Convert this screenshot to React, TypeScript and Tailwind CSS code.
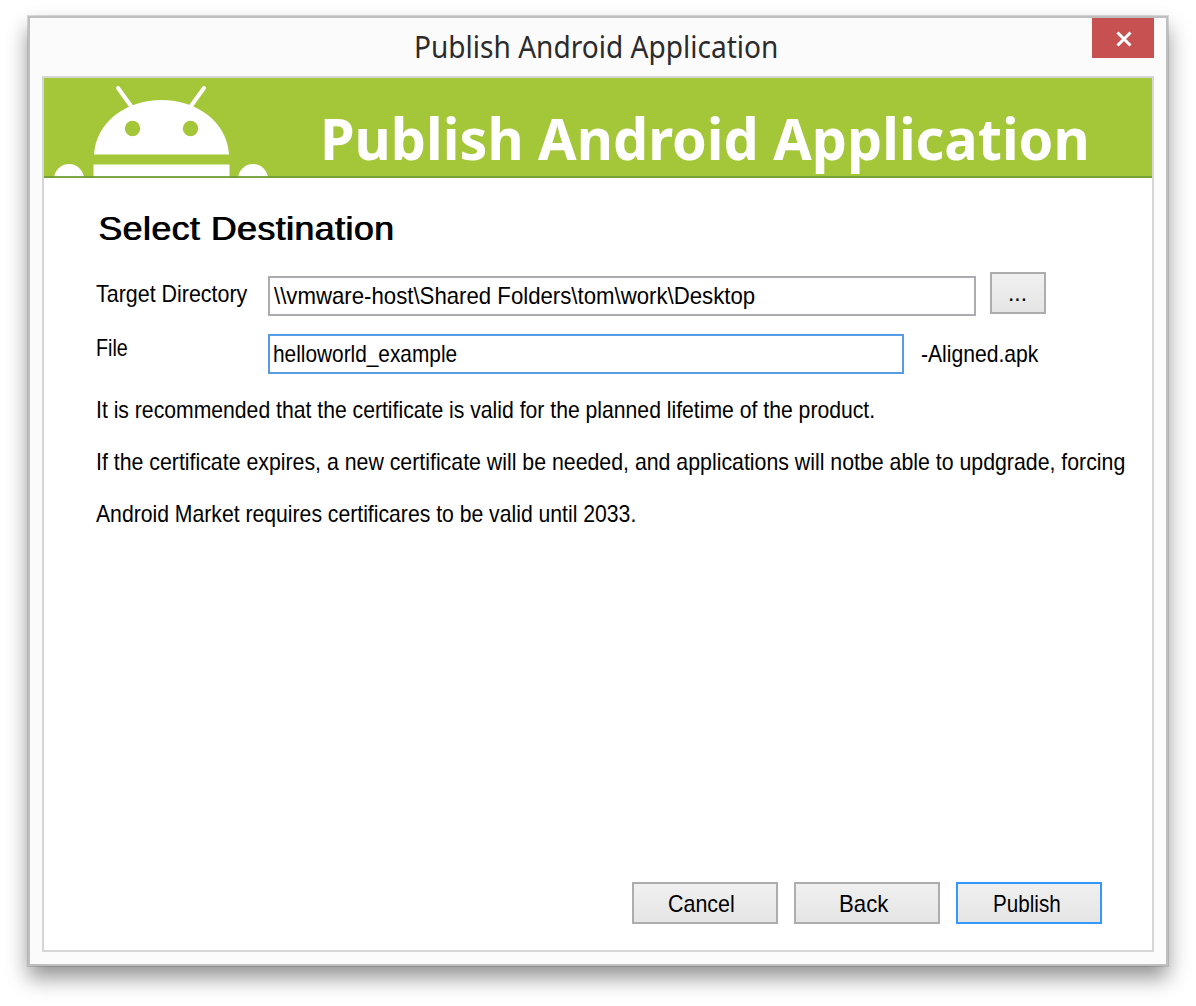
import { useLayoutEffect, useRef, useState, type ReactNode } from "react";

/* Single line of text condensed or widened to a given advance width. */
function Fit({ width, className = "", children }: { width: number; className?: string; children: ReactNode }) {
  const ref = useRef<HTMLSpanElement>(null);
  const [scale, setScale] = useState(1);
  useLayoutEffect(() => {
    if (ref.current) setScale(width / ref.current.offsetWidth);
  }, [width]);
  return (
    <span className={`block shrink-0 ${className}`} style={{ width }}>
      <span
        ref={ref}
        className="inline-block origin-left whitespace-nowrap align-top"
        style={{ transform: `scaleX(${scale})` }}
      >
        {children}
      </span>
    </span>
  );
}

function Robot() {
  return (
    <svg className="block h-[100px] w-[230px] shrink-0" viewBox="44 78 230 100" fill="#fff">
      <path d="M94 154.500C96 122 126 100 161.500 100S227 122 229 154.500Z" />
      <path d="M118 88l13 18M204 88l-13 18" stroke="#fff" strokeWidth="4" strokeLinecap="round" />
      <circle cx="132.500" cy="128.500" r="7.700" fill="#a4c639" />
      <circle cx="190.500" cy="128.500" r="7.700" fill="#a4c639" />
      <path d="M93.500 164.500h136V178h-136z" />
      <circle cx="69" cy="179" r="15" />
      <circle cx="253" cy="179" r="15" />
    </svg>
  );
}

const notes = [
  { text: "It is recommended that the certificate is valid for the planned lifetime of the product.", width: 779 },
  { text: "If the certificate expires, a new certificate will be needed, and applications will notbe able to updgrade, forcing", width: 1029 },
  { text: "Android Market requires certificares to be valid until 2033.", width: 540 },
];

const actions = [
  { text: "Cancel", width: 67, border: "border-[#adadad]", pad: "pl-[34px]" },
  { text: "Back", width: 49, border: "border-[#adadad]", pad: "pl-[43px]" },
  { text: "Publish", width: 68, border: "border-[#3399ff]", pad: "pl-[35px]" },
];

export default function App() {
  return (
    <div className="h-[1006px] w-[1196px] overflow-hidden bg-white pl-7 pt-4 text-black">
      <div className="flex h-[950px] w-[1140px] flex-col border-2 border-[#bfbfbf] bg-[#fbfbfb] shadow-[0_0_0_1px_rgba(0,0,0,0.13),0_12px_20px_rgba(0,0,0,0.42)]">
        <header className="flex h-[58px] shrink-0 items-start justify-between pl-96 pr-3">
          <Fit width={364} className="mt-[9px] font-['Noto_Sans',sans-serif] text-[30px] leading-10 text-[#2b2b2b]">
            Publish Android Application
          </Fit>
          <button className="flex h-10 w-[62px] items-center justify-center bg-[#c75050]" aria-label="Close">
            <svg className="ml-0.5 mt-0.5 h-4 w-4" viewBox="0 0 16 16" fill="none" stroke="#fff" strokeWidth="3">
              <path d="M1.500 1.500L14.500 14.500M14.500 1.500L1.500 14.500" />
            </svg>
          </button>
        </header>

        <main className="mx-3 flex h-[876px] shrink-0 flex-col border-2 border-[#d6d6d6] bg-white font-['Liberation_Sans',Arial,sans-serif] text-2xl leading-8">
          <div className="relative flex h-[100px] shrink-0 items-start bg-[#a4c639]">
            <Robot />
            <Fit
              width={770}
              className="ml-[46px] mt-[19px] font-['Noto_Sans',sans-serif] text-[58px] font-bold leading-[82px] text-white"
            >
              Publish Android Application
            </Fit>
            <div className="absolute inset-x-0 bottom-0 h-0.5 bg-[#6d9f37]/90" />
          </div>

          <div className="flex grow flex-col pl-[52px]">
            <h1 className="mt-[30px] text-[34px] leading-10 tracking-[0.5px] [text-shadow:1px_0_0_#000]">
              <Fit width={296} className="ml-0.5">Select Destination</Fit>
            </h1>

            <div className="mt-6 flex h-[60px] items-start">
              <Fit width={151} className="mt-1.5">Target Directory</Fit>
              <div className="ml-[21px] mt-1 flex h-10 w-[708px] items-center border-2 border-[#abadb3] pl-1">
                <Fit width={481}>{"\\\\vmware-host\\Shared Folders\\tom\\work\\Desktop"}</Fit>
              </div>
              <button className="ml-3.5 flex h-[42px] w-14 items-center border-2 border-[#adadad] bg-linear-to-b from-[#f0f0f0] to-[#e5e5e5] pl-4 text-left">
                <Fit width={19}>...</Fit>
              </button>
            </div>

            <div className="flex h-[62px] items-start">
              <Fit width={32}>File</Fit>
              <div className="ml-[140px] mt-0.5 flex h-10 w-[636px] items-center border-2 border-[#569de5] pl-[3px]">
                <Fit width={184}>helloworld_example</Fit>
              </div>
              <Fit width={117} className="ml-[17px] mt-1.5">-Aligned.apk</Fit>
            </div>

            <div className="flex flex-col gap-5">
              {notes.map((n) => (
                <Fit key={n.text} width={n.width}>{n.text}</Fit>
              ))}
            </div>

            <div className="mb-[26px] mr-[50px] mt-auto flex justify-end gap-4">
              {actions.map((a) => (
                <button
                  key={a.text}
                  className={`flex h-[42px] w-[146px] items-center border-2 bg-linear-to-b from-[#f0f0f0] to-[#e5e5e5] pt-0.5 text-left ${a.border} ${a.pad}`}
                >
                  <Fit width={a.width}>{a.text}</Fit>
                </button>
              ))}
            </div>
          </div>
        </main>
      </div>
    </div>
  );
}
